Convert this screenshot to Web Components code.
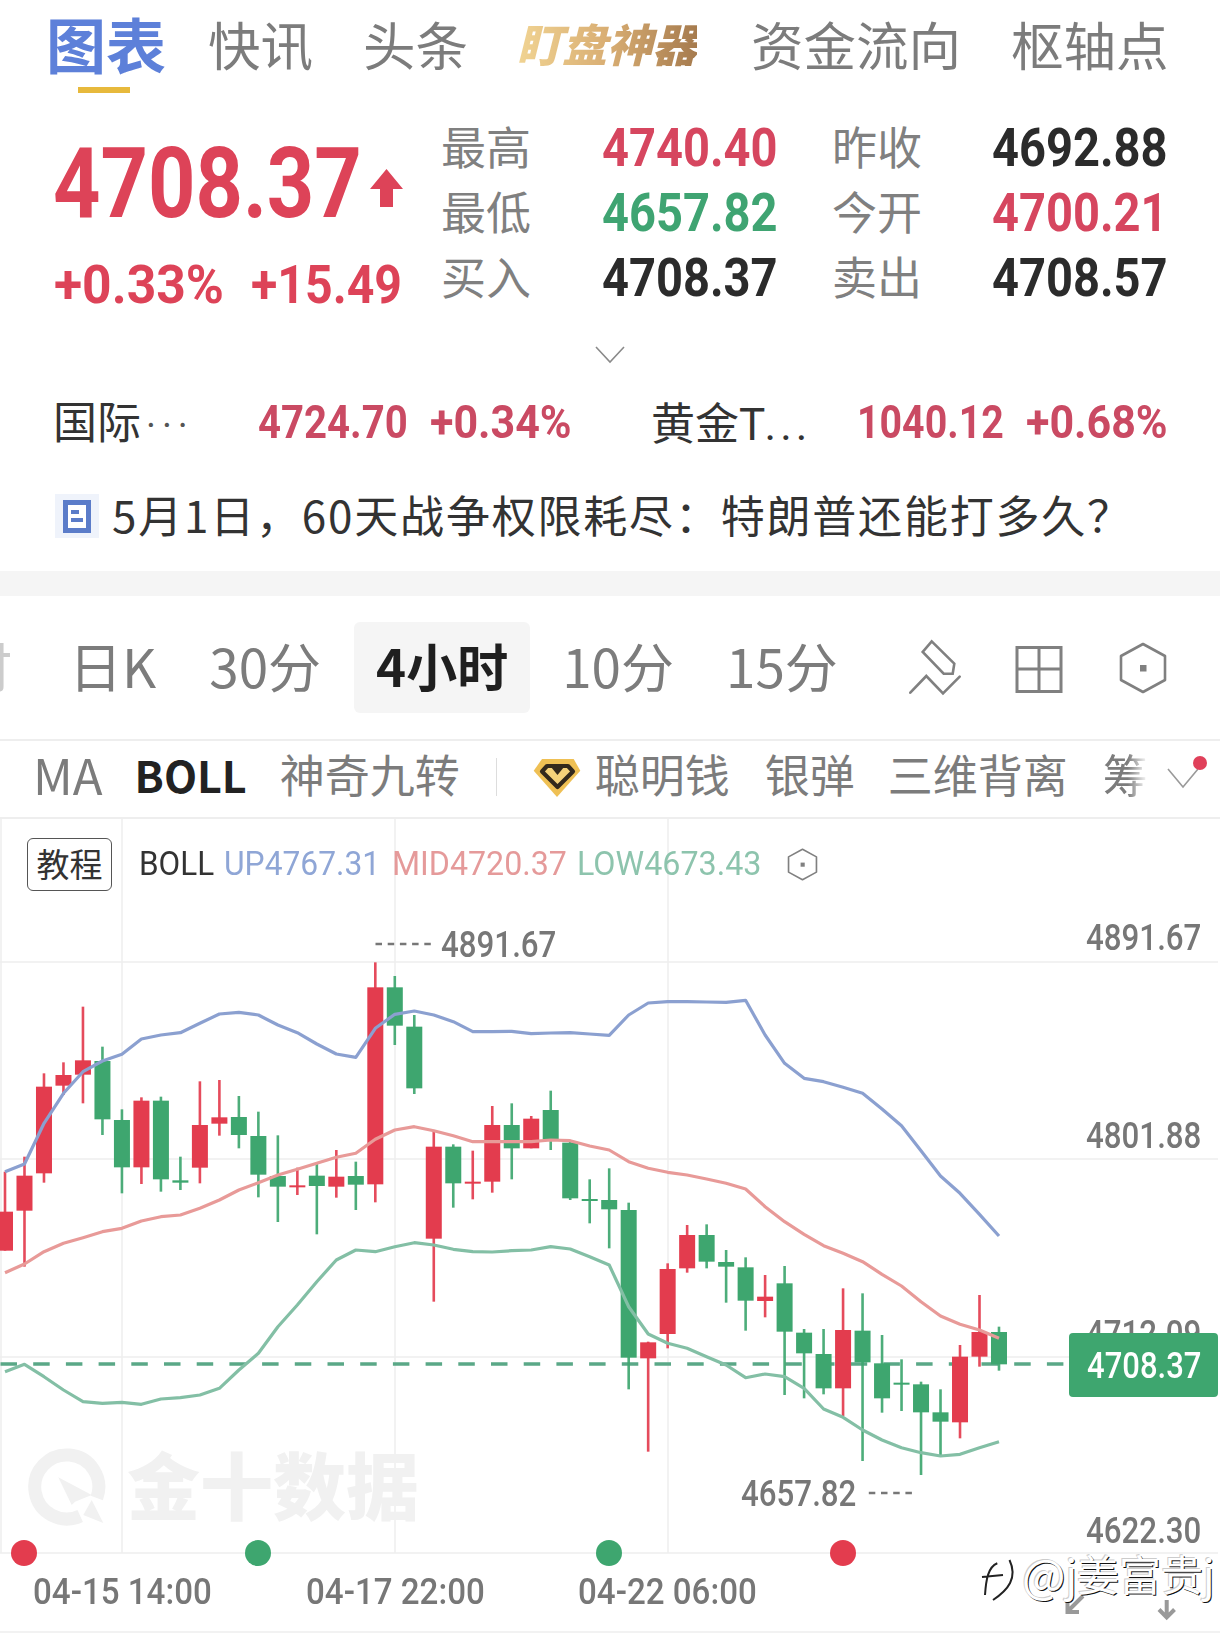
<!doctype html>
<html>
<head>
<meta charset="utf-8">
<style>
  html, body { margin: 0; background: #fff; }
</style>
</head>
<body>
<quote-page>
  <top-nav>
    <nav-tab active style="margin-left:46px">图表</nav-tab>
    <nav-tab style="margin-left:42px">快讯</nav-tab>
    <nav-tab style="margin-left:50px">头条</nav-tab>
    <nav-tab gold style="margin-left:49px">盯盘神器</nav-tab>
    <nav-tab style="margin-left:54px">资金流向</nav-tab>
    <nav-tab style="margin-left:50px">枢轴点</nav-tab>
  </top-nav>
  <quote-summary></quote-summary>
  <related-row></related-row>
  <news-row>5月1日，60天战争权限耗尽：特朗普还能打多久？</news-row>
  <section-gap></section-gap>
  <period-bar></period-bar>
  <indicator-bar></indicator-bar>
  <price-chart></price-chart>
</quote-page>

<script>
const CJK = '"Noto Sans CJK SC", sans-serif';

// the app's digits are a narrow DIN, so squeeze Roboto to the width it takes
class DinNum extends HTMLElement {
  constructor() {
    super();
    this.attachShadow({ mode: 'open' });
    this.shadowRoot.innerHTML = `
      <style>
        :host { display: inline-block; font-family: Roboto, sans-serif; font-weight: 500; line-height: 1; white-space: nowrap; }
        span { display: inline-block; transform-origin: left center; }
      </style>
      <span><slot></slot></span>`;
  }
  connectedCallback() {
    const w = +this.getAttribute('w');
    const span = this.shadowRoot.querySelector('span');
    span.style.transform = '';
    this.style.width = w + 'px';
    span.style.transform = `scaleX(${w / span.offsetWidth})`;
  }
}
customElements.define('din-num', DinNum);

class QuotePage extends HTMLElement {
  constructor() {
    super();
    this.attachShadow({ mode: 'open' });
    this.shadowRoot.innerHTML = `
      <style>
        :host { display: block; width: 1220px; height: 1645px; overflow: hidden; background: #fff; font-family: ${CJK}; }
      </style>
      <slot></slot>`;
  }
}
customElements.define('quote-page', QuotePage);

class TopNav extends HTMLElement {
  constructor() {
    super();
    this.attachShadow({ mode: 'open' });
    this.shadowRoot.innerHTML = `
      <style>
        :host { display: flex; align-items: flex-start; height: 90px; }
      </style>
      <slot></slot>`;
  }
}
customElements.define('top-nav', TopNav);

class NavTab extends HTMLElement {
  constructor() {
    super();
    this.attachShadow({ mode: 'open' });
    this.shadowRoot.innerHTML = `
      <style>
        :host { display: block; position: relative; font-size: 52.5px; line-height: 86px; color: #7c7c7c; white-space: nowrap; }
        :host([active]) { font-size: 60px; font-weight: 700; color: #5d80d9; }
        :host([active])::after { content: ""; position: absolute; left: 32px; width: 52px; top: 87px; height: 6px; background: #e7b93c; }
        :host([gold]) {
          font-size: 45px; font-weight: 900; font-style: italic;
          background: linear-gradient(90deg, #f1d493, #d9ae73 50%, #a67b4e);
          -webkit-background-clip: text; background-clip: text; color: transparent;
        }
      </style>
      <slot></slot>`;
  }
}
customElements.define('nav-tab', NavTab);

class QuoteSummary extends HTMLElement {
  constructor() {
    super();
    this.attachShadow({ mode: 'open' });
    const rows = [
      ['最高', '4740.40', 'up', '昨收', '4692.88', 'flat'],
      ['最低', '4657.82', 'down', '今开', '4700.21', 'up'],
      ['买入', '4708.37', 'flat', '卖出', '4708.57', 'flat'],
    ];
    const cells = rows.map(r => `
      <span class="lbl">${r[0]}</span><din-num class="val ${r[2]}" w="176">${r[1]}</din-num>
      <span class="lbl">${r[3]}</span><din-num class="val ${r[5]}" w="176">${r[4]}</din-num>`).join('');
    this.shadowRoot.innerHTML = `
      <style>
        :host { display: flex; height: 250px; padding-left: 53px; box-sizing: border-box; }
        .left { width: 388px; padding-top: 45px; color: #dd4358; }
        .price { display: flex; align-items: center; }
        .price din-num { font-size: 98px; font-weight: 700; }
        .price svg { display: block; margin-left: 8px; margin-top: 8px; }
        .sub { display: flex; margin-top: 25px; }
        .sub din-num { font-size: 54px; font-weight: 700; }
        .grid { display: grid; grid-template-columns: 161px 230px 160px 177px; grid-auto-rows: 65px; align-items: center; padding-top: 25px; }
        .lbl { font-size: 45px; line-height: 62px; padding-bottom: 3px; color: #808080; }
        .val { font-size: 54px; font-weight: 700; }
        .up { color: #d6465f; }
        .down { color: #3fa472; }
        .flat { color: #2b2b2b; }
      </style>
      <div class="left">
        <div class="price">
          <din-num w="309">4708.37</din-num>
          <svg width="33" height="38" viewBox="0 0 33 38"><path d="M16.5 0 33 20H23V38H10V20H0Z" fill="#dd4358"/></svg>
        </div>
        <div class="sub">
          <din-num w="170" style="margin-left:1px">+0.33%</din-num>
          <din-num w="151" style="margin-left:27px">+15.49</din-num>
        </div>
      </div>
      <div class="grid">${cells}</div>`;
  }
}
customElements.define('quote-summary', QuoteSummary);

class RelatedRow extends HTMLElement {
  constructor() {
    super();
    this.attachShadow({ mode: 'open' });
    this.shadowRoot.innerHTML = `
      <style>
        :host { display: block; }
        .more { display: flex; justify-content: center; height: 51px; padding-top: 6px; box-sizing: border-box; }
        .row { display: grid; grid-template-columns: 205px 172px 221px 206px 169px 142px; align-items: center; height: 60px; padding-left: 53px; color: #333; }
        .name { font-size: 44px; line-height: 58px; padding-bottom: 2px; white-space: nowrap; }
        .dots { font-family: Roboto, sans-serif; color: #555; font-size: 38px; letter-spacing: 6px; margin-left: 5px; }
        .gap { font-family: Roboto, sans-serif; letter-spacing: 4px; }
        din-num { font-size: 46px; font-weight: 700; color: #ca4a63; margin-bottom: 4px; }
      </style>
      <div class="more">
        <svg width="30" height="18" viewBox="0 0 30 18"><path d="M1 1 15 16 29 1" fill="none" stroke="#8a8a8a" stroke-width="1.6"/></svg>
      </div>
      <div class="row">
        <span class="name">国际<span class="dots">···</span></span>
        <din-num w="150">4724.70</din-num>
        <din-num w="142">+0.34%</din-num>
        <span class="name">黄金<span class="gap">T...</span></span>
        <din-num w="147">1040.12</din-num>
        <din-num w="142">+0.68%</din-num>
      </div>`;
  }
}
customElements.define('related-row', RelatedRow);

class NewsRow extends HTMLElement {
  constructor() {
    super();
    this.attachShadow({ mode: 'open' });
    this.shadowRoot.innerHTML = `
      <style>
        :host { display: flex; align-items: center; height: 60px; margin-top: 34px; padding-left: 55px; font-size: 44px; color: #333; letter-spacing: 1.8px; white-space: nowrap; }
        .badge { width: 44px; height: 44px; margin: 2px 13px 0 0; background: #eff3fb; display: flex; align-items: center; justify-content: center; flex: none; }
        .text { line-height: 58px; padding-bottom: 2px; }
        svg { display: block; }
      </style>
      <span class="badge">
        <svg width="28" height="33" viewBox="0 0 28 33">
          <rect x="2.5" y="2.5" width="23" height="28" fill="#fff" stroke="#5b7cc9" stroke-width="5"/>
          <rect x="8" y="10" width="8" height="4" fill="#5b7cc9"/>
          <rect x="8" y="18" width="12" height="4" fill="#5b7cc9"/>
        </svg>
      </span>
      <span class="text"><slot></slot></span>`;
  }
}
customElements.define('news-row', NewsRow);

class SectionGap extends HTMLElement {
  constructor() {
    super();
    this.attachShadow({ mode: 'open' });
    this.shadowRoot.innerHTML = `
      <style>:host { display: block; height: 25px; margin-top: 26px; background: #f5f5f5; }</style>`;
  }
}
customElements.define('section-gap', SectionGap);

class PeriodBar extends HTMLElement {
  constructor() {
    super();
    this.attachShadow({ mode: 'open' });
    this.shadowRoot.innerHTML = `
      <style>
        :host { display: flex; align-items: center; height: 143px; border-bottom: 2px solid #eee; font-size: 53px; color: #7c7c7c; white-space: nowrap; overflow: hidden; }
        .t { line-height: 70px; padding-bottom: 6px; }
        .cut { width: 69px; flex: none; color: #ccc; text-indent: -41px; overflow: hidden; }
        .on { display: flex; align-items: center; box-sizing: border-box; height: 91px; padding: 0 22px 6px; border-radius: 6px; background: #f5f5f5; color: #1f1f1f; font-size: 51px; font-weight: 700; }
        svg { display: block; flex: none; }
        .g { fill: none; stroke: #808080; }
      </style>
      <span class="t cut">时</span>
      <span class="t">日K</span>
      <span class="t" style="margin-left:53px">30分</span>
      <span class="on" style="margin-left:33px">4小时</span>
      <span class="t" style="margin-left:32px">10分</span>
      <span class="t" style="margin-left:52px">15分</span>
      <svg style="margin-left:68px" width="58" height="60" viewBox="905 636 58 60">
        <path class="g" stroke-width="2.6" d="M930.7 639.3 953.3 661.7 951.7 671.7H942.7L921.7 650Z"/>
        <path class="g" stroke-width="2.6" stroke-linecap="round" d="M909.3 690.7 925.3 674 942 691.3 958.7 674.7"/>
      </svg>
      <svg style="margin-left:49px" width="52" height="60" viewBox="1012 636 52 60">
        <path class="g" stroke-width="3" d="M1016 645.5H1060V689.5H1016ZM1038 645.5V689.5M1016 667H1060"/>
      </svg>
      <hex-icon style="margin-left:52px" size="52"></hex-icon>`;
  }
}
customElements.define('period-bar', PeriodBar);

class HexIcon extends HTMLElement {
  constructor() {
    super();
    this.attachShadow({ mode: 'open' });
    const s = this.getAttribute('size') || 52;
    this.shadowRoot.innerHTML = `
      <style>:host { display: block; flex: none; line-height: 0; }</style>
      <svg width="${s}" height="${s}" viewBox="0 0 52 52">
        <path d="M26 2 48 14V38L26 50 4 38V14Z" fill="none" stroke="#808080" stroke-width="2.6" stroke-linejoin="round"/>
        <rect x="23" y="23" width="6.5" height="6.5" fill="#808080"/>
      </svg>`;
  }
}
customElements.define('hex-icon', HexIcon);

class IndicatorBar extends HTMLElement {
  constructor() {
    super();
    this.attachShadow({ mode: 'open' });
    this.shadowRoot.innerHTML = `
      <style>
        :host { display: flex; position: relative; align-items: center; height: 66px; padding: 0 0 10px 33px; box-sizing: content-box; border-bottom: 2px solid #eee; font-size: 45px; line-height: 60px; color: #7c7c7c; white-space: nowrap; }
        .ma { font-size: 49px; }
        .on { font-size: 43px; color: #222; font-weight: 700; }
        .sep { width: 1px; height: 38px; background: #ddd; margin-left: 36px; margin-top: 6px; }
        svg { display: block; flex: none; }
        .fade { margin-left: 35px; -webkit-mask-image: linear-gradient(90deg, #000 55%, transparent); mask-image: linear-gradient(90deg, #000 55%, transparent); }
        .more { position: absolute; left: 1166px; top: 26px; }
        .dot { position: absolute; left: 1193px; top: 15px; width: 14px; height: 14px; border-radius: 50%; background: #e0405a; }
      </style>
      <span class="ma">MA</span>
      <span class="on" style="margin-left:32px">BOLL</span>
      <span style="margin-left:33px">神奇九转</span>
      <span class="sep"></span>
      <svg style="margin:8px 0 0 35px" width="50" height="42" viewBox="530 758 50 42">
        <path d="M540 760H571.7L578.3 771.7 555 798 531.7 771.7Z" fill="#efc054"/>
        <path d="M545 767H566L571 772.5 555.5 788 540 772.5Z" fill="#f5d27a" stroke="#33291c" stroke-width="4.2" stroke-linejoin="round"/>
        <path d="M549 768H562L555.5 776Z" fill="#33291c"/>
      </svg>
      <span style="margin-left:13px">聪明钱</span>
      <span style="margin-left:35px">银弹</span>
      <span style="margin-left:33px">三维背离</span>
      <span class="fade">筹</span>
      <svg class="more" width="34" height="22" viewBox="0 0 34 22"><path d="M2 2 17 20 32 2" fill="none" stroke="#9a9a9a" stroke-width="1.6"/></svg>
      <span class="dot"></span>`;
  }
}
customElements.define('indicator-bar', IndicatorBar);

// candle x is regular, y values below were traced in page pixels off two crops:
// crop A is y = 900 + v/3, crop B is y = 1180 + v/3
const candlesA = [
  ['r',815,935,1052,1052],['r',770,827,932,1100],['r',520,560,820,848],['r',487,525,557,585],
  ['r',320,481,524,610],['g',440,483,658,705],['g',628,660,802,880],['r',592,602,802,852],
  ['g',590,602,838,875],['g',770,841,848,870],['r',544,675,803,850],['r',540,652,671,707],
  ['g',588,651,705,745],['g',635,708,824,892],['g',706,828,860,966],['r',803,856,862,885],
  ['g',790,827,858,1003],['r',750,830,860,893],['g',785,828,854,930],['r',187,262,853,907],
  ['g',228,262,377,435],['g',345,380,565,582],['r',695,740,1016,1205],['g',733,740,850,923],
  ['r',752,845,849,898],['r',618,675,845,878],['g',610,675,745,838],['r',648,656,745,745],
  ['g',572,630,718,750],['g',725,728,895,900],['g',838,897,899,970],['g',805,900,928,1045],
];
const candlesB = [
  ['g',68,90,533,628],['r',485,487,535,815],['r',250,267,462,505],['r',135,165,265,278],
  ['g',133,165,245,265],['g',210,246,260,368],['g',232,262,362,452],['r',285,350,363,412],
  ['g',258,310,455,645],['g',447,458,520,655],['g',447,522,625,643],['r',325,450,625,708],
  ['g',340,452,547,843],['g',465,550,655,698],['g',538,608,612,693],['g',605,613,697,885],
  ['g',628,697,725,825],['r',495,530,727,775],['r',345,456,530,560],['g',440,456,553,572],
];
// boll bands, one y per candle, crop A units
const upper = [815,792,670,580,515,483,463,417,405,398,370,342,337,345,375,398,432,462,472,385,343,333,345,365,395,395,394,401,399,398,402,406,345,309,305,305,306,307,301,405,490,535,545,562,580,627,677,752,828,880,943,1008];
const middle = [1118,1092,1055,1030,1013,995,985,963,950,945,925,900,870,848,825,808,790,772,760,718,690,680,692,707,725,725,725,725,720,722,738,750,785,805,817,825,837,850,867,920,965,1003,1037,1060,1085,1123,1158,1205,1248,1273,1290,1315];
const lower = [1415,1393,1430,1470,1505,1510,1507,1513,1497,1493,1485,1465,1410,1360,1280,1215,1145,1080,1050,1055,1040,1028,1035,1048,1055,1056,1052,1050,1040,1047,1070,1095,1220,1302,1330,1345,1370,1395,1433,1422,1430,1465,1527,1552,1590,1620,1643,1658,1668,1663,1643,1625];

const TOP = 819;
const cx = i => 5 + 19.49 * i;
const ya = v => 900 + v / 3;
const yb = v => 1180 + v / 3;

class PriceChart extends HTMLElement {
  constructor() {
    super();
    this.attachShadow({ mode: 'open' });
    this.shadowRoot.innerHTML = `
      <style>
        :host { display: block; position: relative; height: 826px; color: #777; }
        svg.canvas { position: absolute; left: 0; top: 0; }
        .legend { position: relative; display: flex; align-items: center; height: 53px; padding: 19px 0 0 27px; }
        .btn { width: 85px; height: 53px; box-sizing: border-box; padding-bottom: 4px; border: 1.5px solid #555; border-radius: 6px; display: flex; align-items: center; justify-content: center; font-size: 33px; color: #333; }
        .legend din-num { font-size: 34px; font-weight: 400; margin-bottom: 3px; }
        .mark { position: absolute; font-size: 73px; font-weight: 900; color: #f1f1f1; left: 127px; line-height: 1; white-space: nowrap; }
        .lab { position: absolute; font-size: 37px; color: #777; }
        .tag { position: absolute; left: 1069px; top: ${1333 - TOP}px; width: 149px; height: 64px; border-radius: 4px; background: #3ea66f; display: flex; align-items: center; justify-content: center; }
        .tag din-num { font-size: 37px; color: #fff; }
        .wb { position: absolute; left: 1022px; top: ${1548 - TOP}px; display: flex; align-items: center; height: 50px; font-size: 42px; line-height: 50px; color: #fff; white-space: nowrap; text-shadow: 1px 1px 0 #111, -1px -1px 0 #ccc; }
      </style>
      ${this.canvas()}
      <div class="legend">
        <span class="btn">教程</span>
        <din-num w="75" style="margin-left:27px;color:#333">BOLL</din-num>
        <din-num w="156" style="margin-left:10px;color:#8fa6d6">UP4767.31</din-num>
        <din-num w="175" style="margin-left:12px;color:#e59a9a">MID4720.37</din-num>
        <din-num w="184" style="margin-left:10px;color:#8dc4ad">LOW4673.43</din-num>
        <hex-icon size="33" style="margin-left:25px"></hex-icon>
      </div>
      <span class="mark" style="top:${1446 - TOP}px">金十数据</span>
      ${this.lab('4891.67', 1086, 937)}
      ${this.lab('4801.88', 1086, 1135)}
      ${this.lab('4712.09', 1086, 1333.5)}
      ${this.lab('4622.30', 1086, 1530)}
      ${this.lab('4891.67', 441, 944)}
      ${this.lab('4657.82', 741, 1493)}
      ${this.lab('04-15 14:00', 33, 1591, 179)}
      ${this.lab('04-17 22:00', 306, 1591, 179)}
      ${this.lab('04-22 06:00', 578, 1591, 179)}
      <div class="tag"><din-num w="114">4708.37</din-num></div>
      <div class="wb"><span style="font-size:46px">@</span><span>j姜富贵j</span></div>`;
  }

  lab(text, x, y, w = 115) {
    return `<din-num class="lab" w="${w}" style="left:${x}px;top:${y - TOP - 18.5}px">${text}</din-num>`;
  }

  candle(c, i, y) {
    const [t, wt, bt, bb, wb] = c;
    const col = t === 'r' ? '#e33c4e' : '#3ea66f';
    const x = cx(i);
    const top = y(bt);
    const h = Math.max(y(bb) - top, 2);
    return `<rect x="${x - 1.3}" y="${y(wt)}" width="2.6" height="${y(wb) - y(wt)}" fill="${col}" opacity=".92"/>` +
      `<rect x="${x - 8}" y="${top}" width="16" height="${h}" fill="${col}"/>`;
  }

  band(ys, col) {
    const pts = ys.map((v, i) => `${cx(i).toFixed(1)},${ya(v).toFixed(1)}`).join(' ');
    return `<polyline points="${pts}" fill="none" stroke="${col}" stroke-width="3.2" stroke-linejoin="round"/>`;
  }

  canvas() {
    const grid = [1, 122, 395, 668].map(x => `<path d="M${x} ${TOP}V1553"/>`).join('') +
      [962, 1159, 1357, 1553].map(y => `<path d="M0 ${y}H1218"/>`).join('') +
      `<path d="M0 1632H1220"/>`;
    const bars = candlesA.map((c, i) => this.candle(c, i, ya)).join('') +
      candlesB.map((c, i) => this.candle(c, i + candlesA.length, yb)).join('');
    return `
      <svg class="canvas" width="1220" height="826" viewBox="0 ${TOP} 1220 826">
        <g stroke="#eee" stroke-width="1.5" fill="none">${grid}</g>
        <path d="M96.8 1498A32 32 0 1 0 80.2 1516" fill="none" stroke="#f1f1f1" stroke-width="13"/>
        <path d="M58.3 1477.3 91.7 1495 75 1501.7 71.7 1505ZM91.7 1500 103.3 1523 83.3 1515Z" fill="#f1f1f1"/>
        <path d="M0.5 1364H1069" stroke="#5aa887" stroke-width="3.4" stroke-dasharray="16.5 16.2"/>
        ${bars}
        ${this.band(upper, '#8ba0d0')}
        ${this.band(middle, '#e89a98')}
        ${this.band(lower, '#83bfa5')}
        <path d="M375.5 944H434" stroke="#777" stroke-width="2.5" stroke-dasharray="6.5 5.7"/>
        <path d="M868.8 1493H915.4" stroke="#777" stroke-width="2.5" stroke-dasharray="6.5 5.7"/>
        <circle cx="24" cy="1553" r="13" fill="#e33c4e"/>
        <circle cx="258" cy="1553" r="13" fill="#3ea66f"/>
        <circle cx="609" cy="1553" r="13" fill="#3ea66f"/>
        <circle cx="843" cy="1553" r="13" fill="#e33c4e"/>
        <path d="M997.3 1563.3C988 1567 986 1580 985 1595M982 1577 1003 1575M1009.5 1560C1018 1578 1008 1590 993 1600" fill="none" stroke="#222" stroke-width="2"/>
        <path d="M1083 1596 1068 1611M1067.5 1601V1612H1079" fill="none" stroke="#999" stroke-width="4"/>
        <path d="M1166.7 1600V1617M1159 1609.5 1166.7 1617.5 1174.5 1609.5" fill="none" stroke="#999" stroke-width="4"/>
      </svg>`;
  }
}
customElements.define('price-chart', PriceChart);
</script>
</body>
</html>
